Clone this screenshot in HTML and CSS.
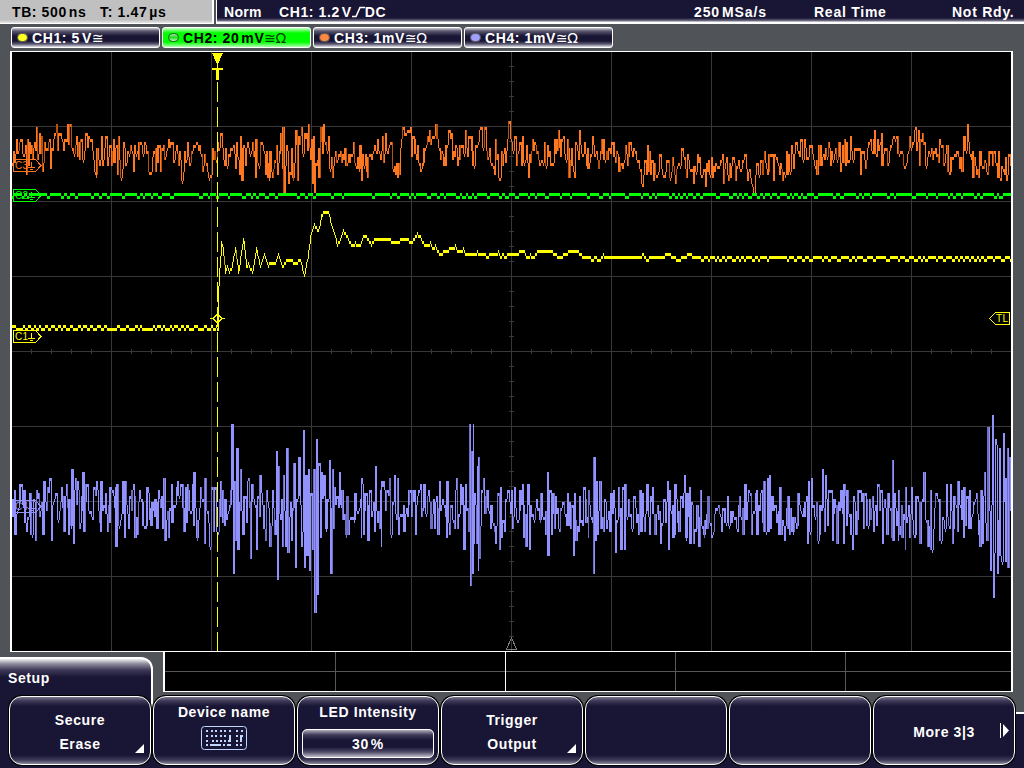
FILE: index.html
```html
<!DOCTYPE html>
<html lang="en">
<head>
  <meta charset="UTF-8">
  <title>Oscilloscope</title>
  <link rel="stylesheet" href="styles.css">
</head>
<body>

<header class="status">
  <div class="timebase"><span class="tb">TB: 500<i></i>ns</span><span class="tt">T: 1.47<i></i>µs</span></div>
  <div class="trigger">
    <span class="mode">Norm</span>
    <span class="source">CH1: 1.2<i></i>V<svg class="edge" width="13" height="12"><path d="M0 10.5H4L8 1.5H13" /></svg>DC</span>
    <span class="rate">250<i></i>MSa/s</span>
    <span class="acq">Real Time</span>
    <span class="state">Not Rdy.</span>
  </div>
</header>

<div class="channels">
  <div class="channel"><b class="led yellow"></b><span>CH1: 5<i></i>V</span><em>≅</em></div>
  <div class="channel active"><b class="led green"></b><span>CH2: 20<i></i>mV</span><em>≅Ω</em></div>
  <div class="channel"><b class="led orange"></b><span>CH3: 1mV</span><em>≅Ω</em></div>
  <div class="channel"><b class="led violet"></b><span>CH4: 1mV</span><em>≅Ω</em></div>
</div>

<svg class="screen" width="999" height="599" viewBox="12 52 999 599">
  <path id="grid" class="grid" />
  <path class="position" d="M506 649.5H517M506.5 649L511.5 638L516.5 649" />

  <path id="ch4" class="trace violet" /><path id="ch4d" class="trace violet dim" />
  <path id="ch3" class="trace orange" /><path id="ch3d" class="trace orange dim" />
  <path id="ch2" class="trace green" /><path id="ch2d" class="trace green dim" />
  <path class="cursor" d="M217.5 82V651" />
  <path id="ch1" class="trace yellow" /><path id="ch1d" class="trace yellow dim" />

  <g class="tag orange" transform="translate(13 159)">
    <path d="M.5 .5H22.5L28 6.5L22.5 12.5H.5ZM18.5 3V8M15 8.5H22M17 10.5H20" /><text x="2" y="10">C3</text>
  </g>
  <g class="tag green" transform="translate(13 189)">
    <path d="M.5 .5H22.5L28 6.5L22.5 12.5H.5ZM18.5 3V8M15 8.5H22M17 10.5H20" /><text x="2" y="10">C2</text>
  </g>
  <g class="tag yellow" transform="translate(13 330)">
    <path d="M.5 .5H22.5L28 6.5L22.5 12.5H.5ZM18.5 3V8M15 8.5H22M17 10.5H20" /><text x="2" y="10">C1</text>
  </g>
  <g class="tag violet" transform="translate(13 500)">
    <path d="M.5 .5H22.5L28 6.5L22.5 12.5H.5ZM18.5 3V8M15 8.5H22M17 10.5H20" /><text x="2" y="10">C4</text>
  </g>
  <g class="tag yellow">
    <path d="M1009.5 312.5H995.5L989.5 318.5L995.5 324.5H1009.5Z" /><text x="996" y="322">TL</text>
    <path d="M210 318.5H213L217.5 314L222 318.5L217.5 323L213 318.5M222 318.5H225" />
  </g>
  <path class="tmark" d="M212 53H223L218 64V68H223V70H219V80H216V70H212V68H217V64Z" />
</svg>

<div class="lower">
  <div class="tab">Setup</div>
  <svg class="overview" width="846" height="39" viewBox="165 652 846 39">
    <path class="division" d="M165 671.5H1012M335.5 652V691M675.5 652V691M845.5 652V691" />
    <path class="middle" d="M505.5 652V691" />
  </svg>
</div>

<nav class="menu">
  <div class="key"><div class="face"><span class="line">Secure</span><span class="line">Erase</span><u class="corner"></u></div></div>
  <div class="key"><div class="face top"><span>Device name</span>
    <svg class="keyboard" width="46" height="24" viewBox="0 0 46 24">
      <rect x=".5" y=".5" width="45" height="23" rx="3" />
      <path d="M5 5H30M35 5H42" stroke-dasharray="2 2.6" />
      <path d="M5 10H28M35 10H42" stroke-dasharray="2 2.6" />
      <path d="M5 15H9M11 15H28M35 15H38" stroke-dasharray="2 2" />
      <path d="M5 19H7M9 19H20M22 19H24M26 19H30M35 19H37M39 19H41M29 9V16M40 9V16" />
    </svg></div></div>
  <div class="key"><div class="face top"><span>LED Intensity</span><div class="value">30<i></i>%</div></div></div>
  <div class="key"><div class="face"><span class="line">Trigger</span><span class="line">Output</span><u class="corner"></u></div></div>
  <div class="key"><div class="face"></div></div>
  <div class="key"><div class="face"></div></div>
  <div class="key"><div class="face"><span>More 3|3</span><svg class="next" width="9" height="15"><path d="M0 0H1V15H0ZM3 1L9 7.5L3 14Z" /></svg></div></div>
</nav>

<script src="scope.js"></script>
</body>
</html>
```
FILE: styles.css
```css
:root {
  --navy: #191534;
  --panel: #505458;
  --yellow: #ffff00;
  --green: #00ff00;
  --orange: #ff7820;
  --violet: #9292ff;
}
* { margin: 0; padding: 0; box-sizing: border-box; }
body {
  width: 1024px;
  height: 768px;
  overflow: hidden;
  background: linear-gradient(var(--panel) 712px, #fff 712px, #fff 714px, var(--navy) 714px);
  color: #fff;
  font: bold 14px/16px "Liberation Sans", Arial, sans-serif;
  letter-spacing: 0.6px;
}
i { display: inline-block; width: 2px; }
svg { display: block; }

.status { display: flex; height: 24px; }
.timebase {
  display: flex;
  width: 214px;
  padding: 4px 0 0 12px;
  background: linear-gradient(#c0c0c0 20px, #e8e8e8 23px, #fff 23px);
  border-right: 2px solid #fff;
  color: #000;
}
.tb { width: 88px; letter-spacing: 0.6px; white-space: nowrap; }
.tt { letter-spacing: 0.65px; }
.trigger {
  display: flex;
  flex: 1;
  margin-left: 2px;
  padding: 4px 0 0 7px;
  background: linear-gradient(var(--navy) 18px, #77758a 21px, #fff 22px);
  border-left: 1px solid #fff;
  white-space: nowrap;
}
.mode { width: 55px; letter-spacing: 0.3px; }
.source { display: flex; width: 415px; letter-spacing: 0.6px; white-space: pre; }
.edge { margin: 2px 0 0; fill: none; stroke: #fff; stroke-width: 1.6; }
.rate { width: 120px; letter-spacing: 0.9px; }
.acq { width: 138px; letter-spacing: 0.75px; }
.state { letter-spacing: 0.75px; }

.channels { display: flex; gap: 2px; padding: 3px 0 0 11px; height: 27px; }
.channel {
  display: flex;
  align-items: center;
  width: 149px;
  height: 21px;
  padding-left: 5px;
  border: 1px solid #fff;
  border-radius: 3px;
  background: linear-gradient(#cfced6, #5b5870 3px, var(--navy) 8px, var(--navy) 13px, #5b5870 16px, #e0e0e8);
}
.channel.active { background: linear-gradient(#c8ffc8, #00ff00 5px, #00ff00 14px, #b0ffb0); color: #000; }
.channel.active em { color: #004000; }
.channel em { font: 14px/16px "DejaVu Sans", sans-serif; letter-spacing: -0.5px; }
.led { width: 11px; height: 9px; margin-right: 4px; border: 1px solid #555; border-radius: 5px; }
.led.yellow { background: #ffff20; }
.led.green { background: linear-gradient(#a0e0a0, #20e020, #c0f0c0); border-color: #186018; }
.led.orange { background: #ff8840; }
.led.violet { background: #a0a0ff; }

.screen {
  box-sizing: content-box;
  margin-left: 10px;
  border: solid #fff;
  border-width: 1px 2px;
  background: #000;
  shape-rendering: crispEdges;
}
.grid { stroke: #383838; }
.position { fill: none; stroke: #808080; }
.cursor { stroke: var(--yellow); stroke-dasharray: 20 5; }
.yellow { color: var(--yellow); }
.green { color: var(--green); }
.orange { color: var(--orange); }
.violet { color: var(--violet); }
.trace { fill: none; stroke: currentColor; }
.dim { stroke: #b85010; }
.dim.violet { stroke: #6e6ec4; }
.dim.green { stroke: #00b400; }
.dim.yellow { stroke: #b4b400; }
.tag path { fill: none; stroke: currentColor; }
.tag text { font: 10px "Liberation Sans", Arial, sans-serif; letter-spacing: 0.3px; fill: currentColor; }
.tmark { fill: var(--yellow); }

.lower { display: flex; height: 43px; justify-content: space-between; }
.tab {
  width: 153px;
  height: 60px;
  margin-top: 5px;
  padding: 11px 8px;
  border: solid #fff;
  border-width: 2px 2px 0 0;
  border-top-right-radius: 12px;
  background: linear-gradient(#f0f0f4, #8b899a 5px, #3d3957 11px, var(--navy) 18px);
}
.overview {
  box-sizing: content-box;
  margin-right: 11px;
  border: solid #fff;
  border-width: 0 2px 1px;
  background: #000;
  shape-rendering: crispEdges;
}
.division { stroke: #585858; }
.middle { stroke: #fff; }

.menu { position: relative; display: flex; padding-left: 8px; }
.key { width: 144px; height: 71px; padding: 1px; border-radius: 14px; background: #000; }
.face {
  position: relative;
  display: flex;
  flex-direction: column;
  align-items: center;
  justify-content: center;
  height: 69px;
  padding-top: 3px;
  border: 1px solid #fff;
  border-radius: 13px;
  background: linear-gradient(#77758a, #3d3957 4px, var(--navy) 9px, var(--navy) 58px, #3d3957 63px, #8b899a);
}
.face.top { justify-content: flex-start; padding-top: 7px; }
.line { line-height: 24px; }
.corner {
  position: absolute;
  right: 6px;
  bottom: 11px;
  width: 9px;
  height: 9px;
  background: #fff;
  clip-path: polygon(100% 0, 100% 100%, 0 100%);
}
.keyboard { margin-top: 6px; fill: none; stroke: #c0d8ff; }
.keyboard path { stroke-width: 2; shape-rendering: crispEdges; }
.value {
  width: 132px;
  height: 29px;
  margin-top: 9px;
  border: 1px solid #fff;
  border-radius: 5px;
  background: linear-gradient(#b0aebc, #3d3957 5px, var(--navy) 10px, var(--navy) 17px, #4d4966 22px, #c0bfca);
  text-align: center;
  line-height: 28px;
}
.next { position: absolute; right: 5px; top: 26px; fill: #fff; }
```
FILE: scope.js
```js
let seed = 7;
function rnd() {
  seed = (seed * 48271) % 2147483647;
  return seed / 2147483647;
}

const ch1 = `217,328 217.6,270 218,286 219,268 221,241 222,244 225,270 227,266 229,270 231,267 235,247 238,270 243,238 246,265
248,262 250,268 252,270 256,248 260,265 264,253 268,265 270,261 274,263 278,253 282,266 286,260 292,260 294,263 300,259 304,274
307,258 310,235 314,224 318,230 321,214 323,211 328,211 332,226 337,243 339,240 343,229 348,238 352,245 355,242 359,245 363,236
366,236 371,244 374,239 390,239 395,242 400,239 408,239 411,242 417,233 420,236 424,243 428,245 430,242 433,248 435,245 440,254
443,251 450,248 455,245 458,251 463,248 465,254 475,254 477,251 479,254 485,254 487,257 489,254 496,254 498,251 500,257 502,253 505,257 508,253
511,254 516,253 520,250 524,250 526,257 530,254 533,257 537,250
551,250 556,254 559,257 563,254 568,251 577,250 580,254 590,257 592,259 594,256 599,259 601,257 603,254 605,256 640,256 643,253 646,259 650,256 663,256 666,253 669,253 672,256 679,259 682,256 690,253 693,256 700,256`;

const ch3 = `12,163 13,151 14,163 16,139 18,151 20,139 22,153 25,145 26,174 29,142 32,159 36,127 37,160 39,133 42,171 44,143 47,151
49,139 50,168 54,133 57,151 60,134 63,150 66,141 70,124 73,154 76,135 79,159 82,160 85,133 88,137 92,152 95,174 97,149 100,160
101,136 103,160 105,136 107,166 112,150 117,175 118,136 120,177 124,148 126,163 130,145 133,171 137,152 144,142 148,171 153,151 155,171
158,145 160,171 163,145 166,151 170,142 173,163 176,145 181,180 184,150 188,157 193,146 196,142 200,154 205,163 208,177 212,148
215,160 217,142 222,148 226,166 230,148 235,168 240,136 242,180 247,142 250,154 255,177 256,139 258,165 262,145 264,154 268,177
270,151 272,177 276,145 277,176 281,133 282,170 283,127 284,192 286,145 288,183 291,148 292,177 296,130 297,180 301,127 303,154 305,139
308,124 310,160 311,140 312,184 313,136 314,192 316,166 319,177 321,127 322,154 323,124 326,150 328,136 329,170 332,177 334,157 337,160
340,151 345,148 349,163 353,142 358,168 360,145 361,180 365,154 367,178 371,160 377,139 380,159 383,162 385,133 387,154 391,142
397,177 399,175 402,127 405,133 409,133 411,157 414,140 418,163 421,168 426,145 429,130 435,124 437,139 440,160 443,166 448,130
451,133 453,151 457,166 460,145 465,130 467,157 474,165 479,130 481,127 482,147 484,127 487,160 490,164 495,139 498,177 501,151 505,163
508,121 510,139 512,150 514,136 516,166 522,136 524,163 528,177 532,139 536,155 538,160 541,160 544,142 548,158 551,163 556,140
558,130 560,158 562,138 564,154 567,139 569,178 571,148 574,178 579,130 581,154 585,154 588,168 592,136 594,158 598,168 602,139
604,160 607,160 611,142 615,162 622,168 625,145 627,166 629,142 633,148 636,160 641,183 645,160 646,175 649,151 653,180 655,174
660,154 662,174 666,160 669,178 672,157 675,183 681,148 683,157 686,177 688,160 693,183 697,154 700,175 703,168 705,186 708,160
712,178 716,166 720,160 722,154 723,183 725,162 728,181 732,157 735,180 738,160 741,170 742,160 746,168 748,171 750,178 753,193
756,163 758,175 760,160 762,174 764,151 767,174 770,154 773,180 776,157 780,163 784,174 788,154 793,168 796,142 800,139 802,160 804,139
806,160 809,145 813,160 817,174 820,145 824,160 828,142 830,166 835,148 840,171 844,139 848,160 850,136 852,160 856,148 860,174
863,151 867,148 872,153 874,130 876,157 880,142 884,148 887,165 890,145 896,136 900,151 903,165 907,154 912,142 914,130 916,150 918,130 919,165
922,133 924,142 925,166 928,151 932,160 935,148 938,163 942,145 948,171 951,157 956,151 962,171 965,151 967,124 970,154 973,177
976,174 979,151 983,168 987,174 993,151 997,178 998,151 1000,181 1004,175 1007,175 1008,154 1010,165`;

const ch4 = `12,500 13,517 14,490 15,535 20,484 26,531 30,493 31,535 33,500 35,540 36,490 43,535 44,481 47,487 49,478 51,541 54,500 57,520 61,486
64,532 66,484 68,535 72,469 73,543 75,478 80,523 83,472 84,532 86,484 92,520 96,481 101,532 101,481 107,532 110,487 113,497 116,547 117,484
120,520 122,481 124,538 125,481 130,500 133,484 135,538 137,535 139,490 147,487 151,526 157,530 158,490 164,478 165,541 168,537 171,484
177,481 184,532 188,490 192,484 193,526 194,472 196,538 200,487 204,544 205,478 209,547 211,487 214,531 214,487 216,532 220,481 224,526
228,510 232,424 232.5,574 234,481 235,541 236,448 238,550 240,469 243,535 247,481 248,478 250,559 252,484 256,550 257,496 260,475
261,493 265,541 266,490 270,547 272,490 275,535 276,451 277,580 278,466 280,520 282,547 283,475 285,547 287,448 288,553 291,520 291,541
294,463 295,568 296,500 299,457 301,547 303,430 304,568 305,475 307,556 308,469 309,571 310,493 313,550 314,469 315,613 316,439 317,595
318,463 320,538 321,472 324,475 325,529 328,500 329,460 331,574 332,469 333,529 339,472 343,520 345,535 347,496 348,535 354,520 361,478 362,484
360.5,538 363,535 365,493 368,541 369,490 374,532 375,466 379,529 381,547 381,481 383,481 385,510 386,490 390,535 389,478 394,475 396,520
397,478 398,535 404,532 409,490 415,535 418,490 424,484 431,530 439,481 437.5,535 442,500 446,538 447,481 449,535 454,528 456,478 457,529
460,484 464,550 465,484 468,532 469,424 470,586 471,451 472,574 472.5,424 473,544 474,493 476,544 477,466 477.5,571 478,457 479,559 481,490 483,478
485,514 490,529 495,544 497,493 499,550 500,487 504,532 507,490 512,529 514,487 517,520 520,490 522,484 524,538 526,547 528,484 528.5,550
533,519 536,499 541,493 546,535 547,472 548,556 549,490 551,535 553,493 559,532 567,493 570,529 573,556 574,493 576,541 580,522 583,487
588,538 588,490 592,523 593,574 594,457 595,541 596,481 597,535 599,500 600,481 601,529 604,499 606,529 608,510 610,532 611,493 613,490 615,553
618,487 619,516 621,550 622,487 624,550 624.5,484 626,516 628,500 631,529 633,496 638,535 640,490 644,532 647,484 649,535 650,496 652,487
655,535 657,505 660,544 663,500 665,523 667,481 668,550 669,490 674,535 675,484 679,532 680,496 684,475 685,538 689,487 690,544 691,502 693,544
697,505 699,547 700,490 703,535 707,529 708,496 713,532 718,505 721,532 725,522 727,496 731,523 737,532 739,497 743,535 744,484 746,520
749,493 751,535 753,511 756,490 757,535 760,493 763,532 764,481 765,532 767,478 768,532 769,475 770,529 774,505 779,535 780,487 781,535 784,541
788,496 792,532 796,529 800,510 805,502 807,544 808,481 809,532 811,478 813,505 817,541 819,535 820,505 822,469 824,532 825,475 828,490
831,490 832,541 834,499 837,544 841,490 843,544 844,484 846,526 847,490 852,550 852.5,496 856,535 858,490 863,529 866,499 873,532 877,484
880,490 882,544 884,499 887,535 888,493 891,538 892,460 893,541 894,493 898,540 898,490 902,537 905,487 904.5,550 909,538 911,487 913,535
916,496 920,544 922,500 924,472 925,520 928,547 930,490 931,550 933,529 935,493 940,541 943,520 946,484 949,529 950,484 952,544 957,532 958,481
963,538 964,487 965,526 969,490 975,500 980,547 981,490 982,544 984,472 985,523 987,541 988,427 990,571 992,415 993,598 994,553 995,439
996,445 997,574 998,520 999,448 1000,556 1001,562 1003,433 1005,562 1006,478 1007,448 1008,568 1009,457 1010,511`;

const parse = text => text.trim().split(/\s+/).map(p => p.split(',').map(Number));
const snap = y => Math.round((y - 1) / 3) * 3 + 1;

// one vertical run per pixel column, three pixels per ADC step
function drawColumns(id, ranges, dimming) {
  let bright = '', dark = '';
  ranges.forEach(([x, top, bottom]) => {
    const run = `M${x + 0.5} ${top}V${bottom + 3}`;
    if (bottom - top > 5 && rnd() < dimming) dark += run;
    else bright += run;
  });
  document.getElementById(id).setAttribute('d', bright);
  document.getElementById(id + 'd').setAttribute('d', dark);
}

function columns(points) {
  const ranges = [];
  const at = x => {
    let n = 0;
    while (n < points.length - 2 && points[n + 1][0] <= x) n++;
    const [a, b] = [points[n], points[n + 1]];
    return a[1] + (b[1] - a[1]) * Math.min(1, Math.max(0, (x - a[0]) / (b[0] - a[0] || 1)));
  };
  let last = snap(at(points[0][0]));
  for (let x = Math.ceil(points[0][0]); x <= points[points.length - 1][0]; x++) {
    const y = snap(at(x));
    // a run stops one step short of the level it came from
    let top = y, bottom = y;
    if (last > y + 3) bottom = last - 3;
    if (last < y - 3) top = last + 3;
    if (x < 219) bottom = Math.max(y, last);
    ranges.push([x, top, bottom]);
    last = y;
  }
  return ranges;
}

// recorded peaks over noise that wanders round the local mean;
// a share of the runs is two pixels wide
function noisy(points, spread, reach, wide) {
  const ranges = [];
  points.sort((a, b) => a[0] - b[0]);
  let last = points[0][1];
  let n = 0;
  for (let x = 12; x <= 1010; x++) {
    const near = points.filter(p => Math.abs(p[0] - x) <= reach);
    const mean = near.reduce((sum, p) => sum + p[1], 0) / (near.length || 1);
    const ys = [last];
    while (n < points.length && points[n][0] <= x) {
      const y = points[n++][1];
      ys.push(y);
      last = y;
    }
    if (ys.length === 1) {
      if (rnd() < 0.8) last = mean + (rnd() + rnd() - 1) * spread;
      ys.push(last);
    }
    const top = snap(Math.min(...ys));
    const bottom = Math.max(top, snap(Math.max(...ys)) - 3);
    const before = ranges[ranges.length - 1];
    if (before && bottom - top > 9 && rnd() < wide) {
      before[1] = Math.min(before[1], top);
      before[2] = Math.max(before[2], bottom);
    }
    ranges.push([x, top, bottom]);
  }
  return ranges;
}

// flat level that toggles to the next ADC step
function flat(from, to, base, step, chance) {
  const ranges = [];
  let off = false, hold = 0;
  for (let x = from; x <= to; x++) {
    if (--hold <= 0) {
      off = !off && rnd() < chance;
      hold = off ? 1 + rnd() * 2.5 : 1 + rnd() * 5;
    }
    const y = off ? base + step : base;
    ranges.push([x, y, y]);
  }
  return ranges;
}

let grid = '';
for (let x = 111; x < 1000; x += 100) grid += `M${x + 0.5} 52V651`;
for (let y = 126; y < 640; y += 75) grid += `M12 ${y + 0.5}H1011`;
for (let x = 31; x < 1011; x += 20) grid += `M${x + 0.5} 349V354`;
for (let y = 66; y < 645; y += 15) grid += `M509 ${y + 0.5}H514`;
document.getElementById('grid').setAttribute('d', grid);

drawColumns('ch4', noisy(parse(ch4), 26, 15, 0.35), 0.22);
drawColumns('ch3', noisy(parse(ch3), 18, 5, 0.2), 0.22);
drawColumns('ch2', flat(12, 1010, 193, 3, 0.6), 0);
drawColumns('ch1', [
  ...flat(12, 216, 328, -3, 0.9),
  ...columns(parse(ch1)),
  ...flat(701, 1010, 256, 3, 0.65)
], 0.1);
```
